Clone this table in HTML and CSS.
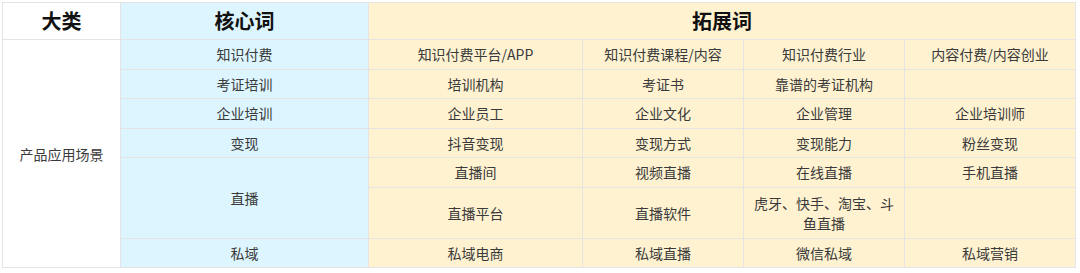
FILE: index.html
```html
<!DOCTYPE html>
<html lang="zh-CN">
<head>
<meta charset="utf-8">
<title>关键词表</title>
<link rel="stylesheet" href="styles.css">
</head>
<body>
<div class="sheet">
<table class="kw">
  <colgroup>
    <col class="c-cat">
    <col class="c-core">
    <col class="c-ext1">
    <col class="c-ext2">
    <col class="c-ext3">
    <col class="c-ext4">
  </colgroup>
  <tr class="r-head">
    <th class="cat">大类</th>
    <th class="core">核心词</th>
    <th class="ext" colspan="4">拓展词</th>
  </tr>
  <tr class="r">
    <td class="cat" rowspan="7">产品应用场景</td>
    <td class="core">知识付费</td>
    <td class="ext">知识付费平台/APP</td>
    <td class="ext">知识付费课程/内容</td>
    <td class="ext">知识付费行业</td>
    <td class="ext">内容付费/内容创业</td>
  </tr>
  <tr class="r">
    <td class="core">考证培训</td>
    <td class="ext">培训机构</td>
    <td class="ext">考证书</td>
    <td class="ext">靠谱的考证机构</td>
    <td class="ext"></td>
  </tr>
  <tr class="r">
    <td class="core">企业培训</td>
    <td class="ext">企业员工</td>
    <td class="ext">企业文化</td>
    <td class="ext">企业管理</td>
    <td class="ext">企业培训师</td>
  </tr>
  <tr class="r">
    <td class="core">变现</td>
    <td class="ext">抖音变现</td>
    <td class="ext">变现方式</td>
    <td class="ext">变现能力</td>
    <td class="ext">粉丝变现</td>
  </tr>
  <tr class="r">
    <td class="core" rowspan="2">直播</td>
    <td class="ext">直播间</td>
    <td class="ext">视频直播</td>
    <td class="ext">在线直播</td>
    <td class="ext">手机直播</td>
  </tr>
  <tr class="r-tall">
    <td class="ext">直播平台</td>
    <td class="ext">直播软件</td>
    <td class="ext">虎牙、快手、淘宝、斗鱼直播</td>
    <td class="ext"></td>
  </tr>
  <tr class="r">
    <td class="core">私域</td>
    <td class="ext">私域电商</td>
    <td class="ext">私域直播</td>
    <td class="ext">微信私域</td>
    <td class="ext">私域营销</td>
  </tr>
</table>
</div>
</body>
</html>
```

FILE: styles.css
```css
html, body {
  margin: 0;
  padding: 0;
  background: #ffffff;
}

body {
  font-family: "Noto Sans CJK SC", "Noto Sans", "Liberation Sans", sans-serif;
  color: #333333;
}

.sheet {
  padding: 2px 0 0 2px;
}

.kw {
  border-collapse: collapse;
  table-layout: fixed;
  width: 1073px;
}

.c-cat { width: 118px; }
.c-core { width: 248px; }
.c-ext1 { width: 214px; }
.c-ext2 { width: 161px; }
.c-ext3 { width: 161px; }
.c-ext4 { width: 171px; }

.kw th,
.kw td {
  box-sizing: border-box;
  padding: 0 6px;
  text-align: center;
  vertical-align: middle;
  border: 1px solid #e4e4e4;
  line-height: 20px;
}

.kw th {
  font-size: 20px;
  font-weight: 700;
  color: #111111;
}

.kw td {
  font-size: 14px;
  font-weight: 400;
  color: #3a3a3a;
}

.r-head { height: 37px; }
.r { height: 29.5px; }
.r-tall { height: 51px; }

.cat {
  background: #ffffff;
  border-color: #e4e4e4;
}

.core {
  background: #ddf5fe;
  border: 1px dotted #c2d9e2;
}

.ext {
  background: #fff2d1;
  border: 1px solid #eadcbc;
}
```
